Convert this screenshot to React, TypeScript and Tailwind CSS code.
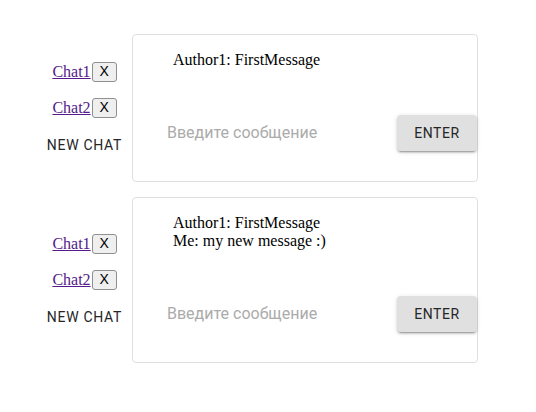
import React from "react";

const serif = "font-['Liberation_Serif','Times_New_Roman',serif]";
const roboto = "font-['Roboto','Liberation_Sans',sans-serif]";

function ChatList() {
  return (
    <div className="flex w-[95px] flex-col items-center">
      {["Chat1", "Chat2"].map((c) => (
        <div key={c} className="mb-[16px] flex h-[20px] items-center">
          <a href="#" className={`${serif} text-[16px] leading-[18px] text-[#551a8b] underline`}>
            {c}
          </a>
          <button className="ml-[1px] flex h-[20px] w-[25px] items-center justify-center rounded-[3px] border border-[#8f8f8f] bg-[#efefef] font-['Liberation_Sans',Arial,sans-serif] text-[14px] text-black">
            X
          </button>
        </div>
      ))}
      <button className={`${roboto} mt-[1px] h-[20px] text-[14px] font-normal uppercase leading-[20px] tracking-[0.7px] text-[#262626]`}>
        New Chat
      </button>
    </div>
  );
}

function Panel({ messages }: { messages: string[] }) {
  return (
    <div className="flex items-center">
      <ChatList />
      <div className="flex w-[346px] flex-col rounded-[4px] border border-[#e0e0e0] bg-white pb-[30px] pt-[16px]">
        <div className={`${serif} pl-[40px] text-[16px] leading-[18px] text-black`}>
          {messages.map((m) => (
            <div key={m}>{m}</div>
          ))}
        </div>
        <div className="mt-[46px] flex items-center">
          <input
            placeholder="Введите сообщение"
            className={`${roboto} ml-[34px] flex-1 bg-transparent text-[16px] text-black outline-none placeholder:text-[#ababab]`}
          />
          <button className={`${roboto} h-[36px] w-[80px] rounded-[4px] bg-[#e0e0e0] text-[14px] font-normal uppercase tracking-[0.6px] text-[#262626] shadow-[0px_3px_1px_-2px_rgba(0,0,0,0.2),0px_2px_2px_0px_rgba(0,0,0,0.14),0px_1px_5px_0px_rgba(0,0,0,0.12)]`}>
            Enter
          </button>
        </div>
      </div>
    </div>
  );
}

export default function App() {
  return (
    <div className="flex min-h-[412px] w-[536px] flex-col gap-[15px] bg-white pl-[37px] pt-[34px]">
      <Panel messages={["Author1: FirstMessage"]} />
      <Panel messages={["Author1: FirstMessage", "Me: my new message :)"]} />
    </div>
  );
}
